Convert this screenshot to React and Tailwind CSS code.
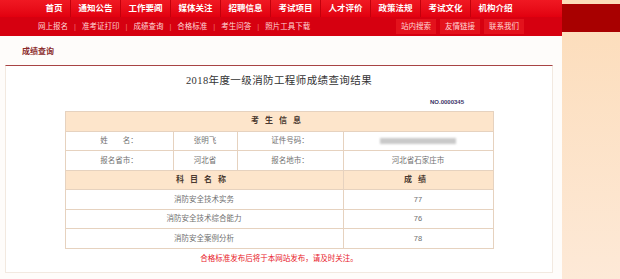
export default function App() {
  const nav = ["通知公告", "工作要闻", "媒体关注", "招聘信息", "考试项目", "人才评价", "政策法规", "考试文化", "机构介绍"];
  const sub = ["网上报名", "准考证打印", "成绩查询", "合格标准", "考生问答", "照片工具下载"];
  const btns = ["站内搜索", "友情链接", "联系我们"];
  const subjects = [
    ["消防安全技术实务", "77"],
    ["消防安全技术综合能力", "76"],
    ["消防安全案例分析", "78"],
  ];
  const td = "border border-[#e6d2bf] text-center text-[7.5px] text-[#707070] h-[19.5px] p-0";
  const th = "border border-[#e6d2bf] bg-[#fde5cb] text-center text-[8px] font-bold text-[#4a3a30] h-[19.5px] p-0";
  return (
    <div className="flex h-[279px] w-[620px] overflow-hidden bg-[#fefcfa] font-['Liberation_Sans','Noto_Sans_CJK_SC',sans-serif]">
      <div className="flex w-[562px] shrink-0 flex-col">
        {/* header */}
        <div className="flex h-[17px] items-center bg-gradient-to-b from-[#f01822] to-[#e2000f] pl-[38px] text-[8.5px] font-bold text-white">
          <div className="flex h-full w-[32px] items-center justify-center">首页</div>
          {nav.map((n) => (
            <div key={n} className="flex h-full w-[50px] items-center justify-center border-l border-[#c2000c]">
              {n}
            </div>
          ))}
        </div>
        <div className="flex h-[19px] items-center bg-[#d60010] pl-[38px] pr-[38px] text-[7.5px] text-[#ffd6d6]">
          <div className="flex items-center gap-[6px]">
            {sub.map((s, i) => (
              <div key={s} className="flex items-center gap-[6px]">
                {i > 0 && <span className="text-[#f07070]">|</span>}
                <span>{s}</span>
              </div>
            ))}
          </div>
          <div className="ml-auto flex items-center gap-[4px]">
            {btns.map((b) => (
              <div key={b} className="flex h-[15px] w-[40px] items-center justify-center bg-[#e3121c]">
                {b}
              </div>
            ))}
          </div>
        </div>
        {/* breadcrumb */}
        <div className="flex h-[29px] items-end pb-[7px] pl-[22px] text-[8px] font-bold text-[#8a2a2a]">成绩查询</div>
        {/* panel */}
        <div className="mx-[5px] flex h-[208px] w-[548px] flex-col items-center border-x border-b border-t border-x-[#f2e9e0] border-b-[#f2e9e0] border-t-[#a84444] bg-white">
          <div className="mt-[7px] h-[16px] text-[10.5px] leading-[16px] tracking-[0.4px] text-[#333] font-['Liberation_Serif','Noto_Sans_CJK_SC',serif]">
            2018年度一级消防工程师成绩查询结果
          </div>
          <div className="mt-[9px] mb-[5px] flex h-[8px] w-[428px] justify-end pr-[29px] text-[6px] font-bold leading-[8px] text-[#3a3366]">
            NO.0000345
          </div>
          <table className="w-[428px] table-fixed border-collapse border border-[#dcc6b2]">
            <colgroup>
              <col className="w-[108px]" />
              <col className="w-[64px]" />
              <col className="w-[106px]" />
              <col className="w-[150px]" />
            </colgroup>
            <tbody>
              <tr>
                <td colSpan={4} className={th}>
                  <span className="tracking-[6px]">考生信息</span>
                </td>
              </tr>
              <tr>
                <td className={td}>姓&emsp;&emsp;名：</td>
                <td className={td}>张明飞</td>
                <td className={td}>证件号码：</td>
                <td className={td}>
                  <div className="mx-auto h-[6px] w-[76px] bg-[#c9c9c9] blur-[1px]"></div>
                </td>
              </tr>
              <tr>
                <td className={td}>报名省市：</td>
                <td className={td}>河北省</td>
                <td className={td}>报名地市：</td>
                <td className={td}>河北省石家庄市</td>
              </tr>
              <tr>
                <td colSpan={3} className={th}>
                  <span className="tracking-[6px]">科目名称</span>
                </td>
                <td className={th}>
                  <span className="tracking-[6px]">成绩</span>
                </td>
              </tr>
              {subjects.map(([s, v]) => (
                <tr key={s}>
                  <td colSpan={3} className={td}>{s}</td>
                  <td className={td}>{v}</td>
                </tr>
              ))}
            </tbody>
          </table>
          <div className="mt-[6px] text-[7.5px] leading-[8px] text-[#e8202a]">合格标准发布后将于本网站发布，请及时关注。</div>
        </div>
      </div>
      <div className="flex flex-1 flex-col bg-gradient-to-b from-[#fcdcb9] to-[#fde9d7]">
        <div className="mt-[4px] h-[28px] bg-[#a80000]"></div>
      </div>
    </div>
  );
}
